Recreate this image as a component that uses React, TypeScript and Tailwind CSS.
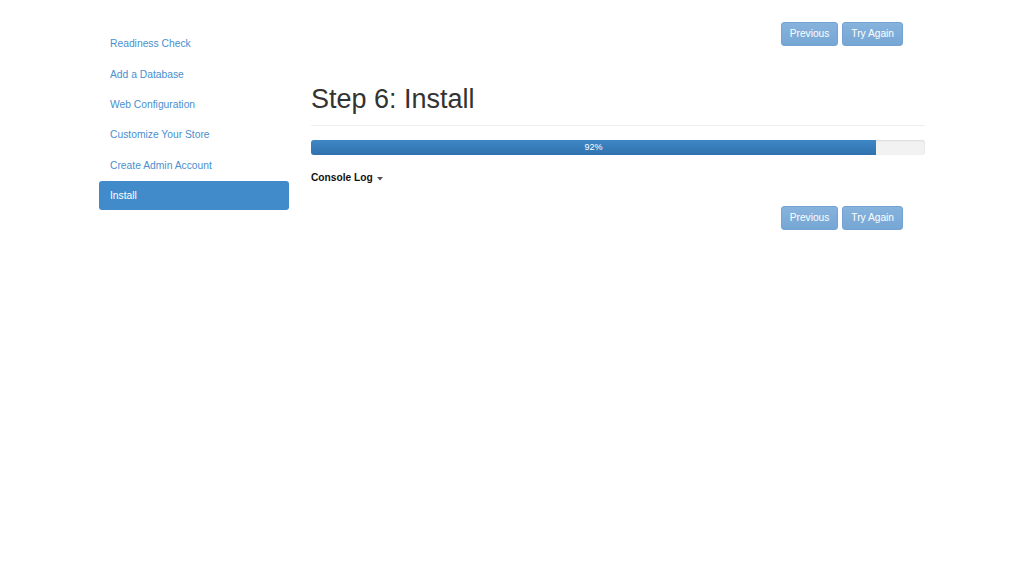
import React from "react";

const steps = [
  "Readiness Check",
  "Add a Database",
  "Web Configuration",
  "Customize Your Store",
  "Create Admin Account",
  "Install",
];

function Buttons() {
  return (
    <div className="flex justify-end gap-[4px] pr-[22px]">
      <button className="h-[24px] px-[8px] rounded-[3px] border border-[#72a3d3] bg-gradient-to-b from-[#86b3dd] to-[#76a6d4] text-white text-[10.2px] leading-none">
        Previous
      </button>
      <button className="h-[24px] px-[8px] rounded-[3px] border border-[#72a3d3] bg-gradient-to-b from-[#86b3dd] to-[#76a6d4] text-white text-[10.2px] leading-none">
        Try Again
      </button>
    </div>
  );
}

export default function App() {
  const pct = 92;
  return (
    <div
      className="min-h-[563px] w-full bg-white"
      style={{ fontFamily: '"Liberation Sans", Arial, sans-serif' }}
    >
      <div className="mx-auto flex w-[826px] gap-[22px]">
        <nav className="w-[190px] shrink-0 pt-[29.5px] flex flex-col gap-[1.4px]">
          {steps.map((s) => {
            const active = s === "Install";
            return (
              <div
                key={s}
                className={
                  active
                    ? "h-[29px] flex items-center px-[11px] rounded-[3px] bg-[#418bcb] text-white text-[10.3px]"
                    : "h-[29px] flex items-center px-[11px] text-[#4a8fcf] text-[10.3px]"
                }
              >
                {s}
              </div>
            );
          })}
        </nav>
        <main className="flex-1 pt-[22px]">
          <Buttons />
          <h1 className="mt-[38px] h-[30px] text-[27px] leading-[30px] text-[#333] font-normal">
            Step 6: Install
          </h1>
          <div className="mt-[11px] border-t border-[#eeeeee]" />
          <div className="mt-[14px] h-[15px] w-full rounded-[3px] bg-[#f2f2f2] shadow-[inset_0_1px_2px_rgba(0,0,0,0.1)] overflow-hidden">
            <div
              className="h-full bg-gradient-to-b from-[#3f87c6] to-[#2f72ad] flex items-center justify-center text-white text-[9px] leading-none"
              style={{ width: `${pct}%` }}
            >
              {pct}%
            </div>
          </div>
          <div className="mt-[16px] h-[14px] flex items-center gap-[4px] text-[10.2px] font-bold text-[#111]">
            <span>Console Log</span>
            <svg width="6" height="4" viewBox="0 0 6 4" className="mt-[1px]">
              <path d="M0 0 L6 0 L3 3.5 Z" fill="#555" />
            </svg>
          </div>
          <div className="mt-[21px]">
            <Buttons />
          </div>
        </main>
      </div>
    </div>
  );
}
